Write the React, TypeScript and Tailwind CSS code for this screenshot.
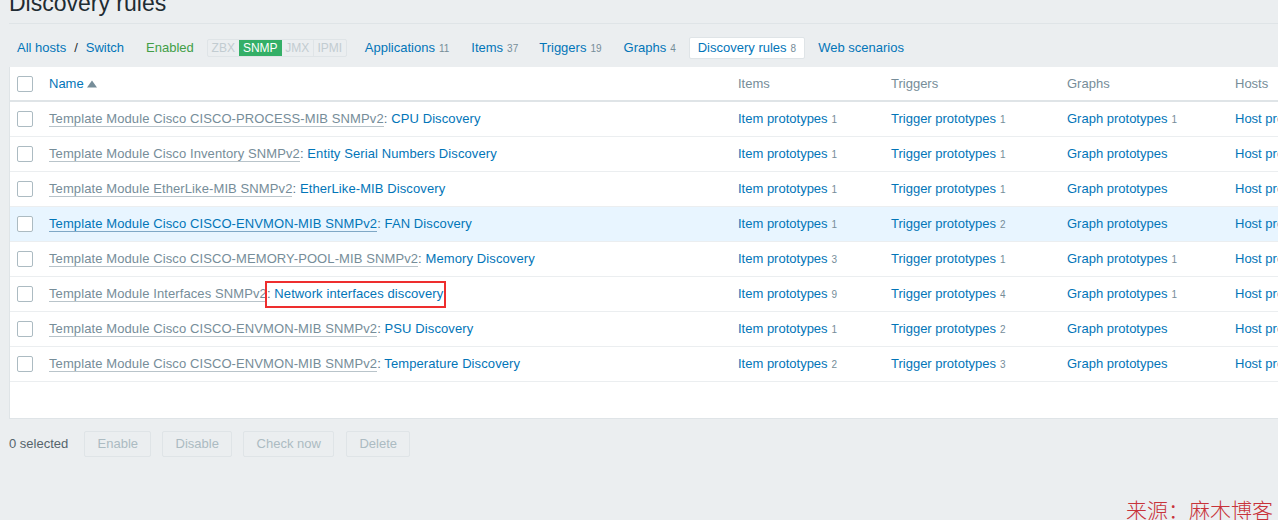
import React from 'react';

interface Rule {
  template: string;
  name: string;
  items: number;
  triggers: number;
  graphs?: number;
  hover?: boolean;
  marked?: boolean;
}

const RULES: Rule[] = [
  { template: 'Template Module Cisco CISCO-PROCESS-MIB SNMPv2', name: 'CPU Discovery', items: 1, triggers: 1, graphs: 1 },
  { template: 'Template Module Cisco Inventory SNMPv2', name: 'Entity Serial Numbers Discovery', items: 1, triggers: 1 },
  { template: 'Template Module EtherLike-MIB SNMPv2', name: 'EtherLike-MIB Discovery', items: 1, triggers: 1 },
  { template: 'Template Module Cisco CISCO-ENVMON-MIB SNMPv2', name: 'FAN Discovery', items: 1, triggers: 2, hover: true },
  { template: 'Template Module Cisco CISCO-MEMORY-POOL-MIB SNMPv2', name: 'Memory Discovery', items: 3, triggers: 1, graphs: 1 },
  { template: 'Template Module Interfaces SNMPv2', name: 'Network interfaces discovery', items: 9, triggers: 4, graphs: 1, marked: true },
  { template: 'Template Module Cisco CISCO-ENVMON-MIB SNMPv2', name: 'PSU Discovery', items: 1, triggers: 2 },
  { template: 'Template Module Cisco CISCO-ENVMON-MIB SNMPv2', name: 'Temperature Discovery', items: 2, triggers: 3 },
];

const NAV_TABS = [
  { label: 'Applications', count: 11 },
  { label: 'Items', count: 37 },
  { label: 'Triggers', count: 19 },
  { label: 'Graphs', count: 4 },
  { label: 'Discovery rules', count: 8, active: true },
  { label: 'Web scenarios' },
];

// 하단 일괄 버튼 — 모두 비활성 상태
const MASS_BUTTONS = [
  { label: 'Enable', cls: 'w-[67px]' },
  { label: 'Disable', cls: 'w-[70px]' },
  { label: 'Check now', cls: 'w-[91px]' },
  { label: 'Delete', cls: 'ml-[1px] w-[64px]' },
];

function Count({ n }: { n?: number }) {
  if (n === undefined) return null;
  return <span className="ml-[4px] text-[10px] text-[#768d99]">{n}</span>;
}

function Checkbox() {
  return <span className="block h-[16px] w-[16px] rounded-[2px] border border-[#acbbc2] bg-white" />;
}

function RuleRow({ rule }: { rule: Rule }) {
  return (
    <div className={`flex h-[35px] items-center border-b border-[#ebeef0] ${rule.hover ? 'bg-[#e8f5ff]' : 'bg-white'}`}>
      <div className="flex w-[32px] justify-start pl-[7px]">
        <Checkbox />
      </div>
      <div className="w-[689px] whitespace-nowrap pl-[7px] tracking-[0.1px]">
        <span
          className={`border-b ${rule.hover ? 'border-[#7fa8c6] text-[#0275b8]' : 'border-[#b9c4ca] text-[#768d99]'}`}
        >
          {rule.template}
        </span>
        <span className="text-[#5a7384]">: </span>
        {rule.marked ? (
          <span className="relative text-[#0275b8]">
            Network interfaces discovery
            <span className="absolute -top-[5px] -bottom-[7px] -left-[9px] -right-[3px] border-2 border-[#ee2e2e]" />
          </span>
        ) : (
          <span className="text-[#0275b8]">{rule.name}</span>
        )}
      </div>
      <div className="w-[153px] whitespace-nowrap pl-[7px] text-[#0275b8]">
        Item prototypes
        <Count n={rule.items} />
      </div>
      <div className="w-[176px] whitespace-nowrap pl-[7px] text-[#0275b8]">
        Trigger prototypes
        <Count n={rule.triggers} />
      </div>
      <div className="w-[168px] whitespace-nowrap pl-[7px] text-[#0275b8]">
        Graph prototypes
        <Count n={rule.graphs} />
      </div>
      <div className="flex-1 whitespace-nowrap pl-[7px] text-[#0275b8]">Host prototypes</div>
    </div>
  );
}

export default function App() {
  return (
    <div
      className="h-[520px] w-full overflow-hidden bg-[#ebeef0] text-[13px] text-[#1f2c33]"
      style={{ fontFamily: '"Liberation Sans", Arial, sans-serif' }}
    >
      {/* title, cut off by the top of the window */}
      <div className="ml-[9px] flex h-[24px] items-start border-b border-[#dfe4e7]">
        <h1 className="-mt-[8px] text-[23px] leading-[23px] text-[#1f2c33]">Discovery rules</h1>
      </div>

      {/* host navigation */}
      <div className="flex items-center pl-[17px] pt-[13px] pb-[8px]">
        <div className="flex h-[22px] items-center whitespace-nowrap">
          <span className="text-[#0275b8]">All hosts</span>
          <span className="mx-[8px] text-[#1f2c33]">/</span>
          <span className="text-[#0275b8]">Switch</span>
          <span className="ml-[22px] text-[#429e47]">Enabled</span>
          <div className="ml-[13px] flex h-[18px] overflow-hidden rounded-[2px] border border-[#dfe4e7] text-[12px] leading-[16px]">
            <span className="w-[31px] text-center text-[#c2ccd1]">ZBX</span>
            <span className="w-[43px] bg-[#34af67] text-center text-white">SNMP</span>
            <span className="w-[32px] border-r border-[#dfe4e7] text-center text-[#c2ccd1]">JMX</span>
            <span className="w-[32px] text-center text-[#c2ccd1]">IPMI</span>
          </div>
        </div>
        <div className="ml-[9px] flex items-center gap-[4px]">
          {NAV_TABS.map((t, i) => (
            <div
              key={t.label}
              className={`flex h-[22px] items-center whitespace-nowrap rounded-[2px] px-[8px] ${i === 2 ? '-ml-[1px]' : ''} ${
                t.active ? 'border border-[#dfe4e7] bg-white' : 'border border-transparent'
              }`}
            >
              <span className="text-[#0275b8]">{t.label}</span>
              {t.count !== undefined && <span className="ml-[4px] text-[10px] text-[#768d99]">{t.count}</span>}
            </div>
          ))}
        </div>
      </div>

      {/* table */}
      <div className="ml-[9px] w-[1400px] border-b border-l border-[#dfe4e7] bg-white pb-[36px]">
        <div className="flex h-[35px] items-center border-b-2 border-[#dfe4e7] text-[#768d99]">
          <div className="flex w-[32px] pl-[7px]">
            <Checkbox />
          </div>
          <div className="flex w-[689px] items-center pl-[7px]">
            <span className="text-[#0275b8]">Name</span>
            <svg width="10" height="8" viewBox="0 0 10 8" className="ml-[3px]">
              <path d="M0 7.5 L5 0.5 L10 7.5 Z" fill="#768d99" />
            </svg>
          </div>
          <div className="w-[153px] pl-[7px]">Items</div>
          <div className="w-[176px] pl-[7px]">Triggers</div>
          <div className="w-[168px] pl-[7px]">Graphs</div>
          <div className="flex-1 pl-[7px]">Hosts</div>
        </div>
        {RULES.map((r, i) => (
          <RuleRow key={i} rule={r} />
        ))}
      </div>

      {/* mass actions */}
      <div className="mt-[12px] flex items-center pl-[9px]">
        <span className="mr-[16px] text-[#55646c]">0 selected</span>
        <div className="flex gap-[11px]">
          {MASS_BUTTONS.map((b) => (
            <button
              key={b.label}
              className={`h-[26px] rounded-[2px] border border-[#dfe4e7] bg-[#ebeef0] text-[13px] text-[#acbbc2] ${b.cls}`}
            >
              {b.label}
            </button>
          ))}
        </div>
      </div>

      {/* watermark */}
      <div className="mt-[42px] flex justify-end pr-[5px]">
        <span
          className="text-[21px] font-light leading-[21px] text-[#c8333a]"
          style={{ fontFamily: '"Noto Sans CJK SC", sans-serif' }}
        >
          来源：麻木博客
        </span>
      </div>
    </div>
  );
}
